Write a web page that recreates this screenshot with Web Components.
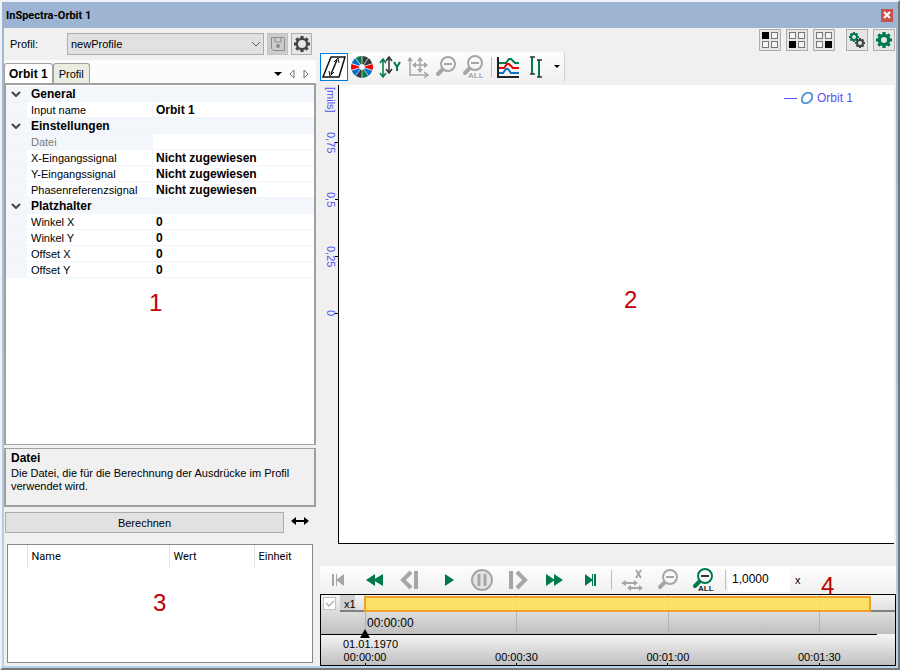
<!DOCTYPE html>
<html lang="de">
<head>
<meta charset="utf-8">
<title>InSpectra-Orbit 1</title>
<style>
  html, body {
    height: 100%;
  }

  body {
    margin: 0;
    font-family: "Liberation Sans", Arial, sans-serif;
    font-size: 11px;
    color: #000;
    background: #f0f0f0;
  }
</style>
</head>
<body>
<orbit-window heading="InSpectra-Orbit 1">
  <settings-pane slot="side"></settings-pane>
  <chart-pane slot="main"></chart-pane>
</orbit-window>

<script>
const GREEN = '#007a4d';
const GREY = '#a6a6a6';

const magnifier = (color) => `
  <circle cx="14" cy="8" r="7" fill="none" stroke="${color}" stroke-width="2"/>
  <path d="M10 8h8" stroke="${color === GREY ? GREY : '#333'}" stroke-width="2"/>
  <path d="M8 14l-4 4" stroke="${color}" stroke-width="4" stroke-linecap="round"/>`;

const allLabel = (color) => `
  <text x="7" y="23" font-family="Liberation Sans, sans-serif" font-weight="bold" font-size="8" fill="${color}" stroke="#f8f8f8" stroke-width="2" paint-order="stroke">ALL</text>`;

const gear = (cx, cy, r, color, hole) => {
  const outer = r * 0.78;
  let teeth = '';
  for (let i = 0; i < 8; i++) {
    teeth += `<rect x="${cx - r / 5}" y="${cy - r}" width="${r / 2.5}" height="${r / 2.5}" transform="rotate(${i * 45} ${cx} ${cy})"/>`;
  }
  return `<g fill="${color}">${teeth}</g>
    <circle cx="${cx}" cy="${cy}" r="${(outer + hole) / 2}" fill="none" stroke="${color}" stroke-width="${outer - hole}"/>`;
};

const wheel = () => {
  const colors = [GREEN, '#333d3d', '#0a6fc8', '#e00', '#333d3d', GREEN, '#333d3d', '#0a6fc8', '#e00', GREEN];
  const point = (deg, r) => {
    const a = deg * Math.PI / 180;
    return `${(11 + r * Math.sin(a)).toFixed(1)} ${(11 - r * Math.cos(a)).toFixed(1)}`;
  };
  const slices = ['#333d3d', '#333d3d', '#e00', '#0a6fc8', GREEN, '#333d3d', '#0a6fc8', '#e00', '#0a6fc8', GREEN];
  return slices.map((color, i) => {
    const a = i * 36 + 2;
    const b = a + 32;
    return `<path fill="${color}" d="M${point(a + 4, 3)}L${point(a, 11)}A11 11 0 0 1 ${point(b, 11)}L${point(b - 4, 3)}z"/>`;
  }).join('');
};

const quad = (filled) => [[0, 0], [9, 0], [0, 9], [9, 9]].map(([x, y], i) =>
  `<rect x="${x + 0.5}" y="${y + 0.5}" width="6" height="6" fill="${i === filled ? '#000' : '#f4f4f4'}" stroke="${i === filled ? '#000' : '#777'}"/>`).join('');

// name: [width, height, markup]
const ICONS = {
  slant: [24, 24, `<path d="M9 2h14l-6 20H1z" fill="#fff" stroke="#111" stroke-width="1.500"/>
    <path d="M15 5L9 19" stroke="#111" stroke-width="1.500"/><path d="M12 7l4-4 1 5M7 16l1 5 4-4" fill="none" stroke="#111"/>`],
  wheel: [22, 22, wheel()],
  scaleY: [22, 22, `<path d="M4 4v16M1 7l3-4 3 4M1 17l3 4 3-4" fill="none" stroke="${GREEN}" stroke-width="1.500"/>
    <path d="M10 2v14M7 5l3-4 3 4M7 13l3 4 3-4" fill="none" stroke="#333" stroke-width="1.500"/>
    <path d="M15 6l3 5 3-5M18 10v5" fill="none" stroke="${GREEN}" stroke-width="2"/>`],
  pan: [22, 22, `<g fill="none" stroke="${GREY}" stroke-width="1.500"><path d="M3 3v16h17M1 5l2-3 2 3M17 16l4 3-4 3"/>
    <path d="M13 3v12M7 9h12"/></g>
    <path d="M13 1l3 4h-6zM13 17l3-4h-6zM5 9l4-3v6zM21 9l-4-3v6z" fill="${GREY}"/>`],
  zoomOut: [24, 22, magnifier(GREY)],
  zoomAll: [26, 24, magnifier(GREY) + allLabel(GREY)],
  zoomAllGreen: [26, 24, magnifier(GREEN) + allLabel('#222')],
  curves: [22, 22, `<path d="M1 1v20h21" fill="none" stroke="#222" stroke-width="2"/>
    <path d="M2 7h7l3-4h2l4 4h4" fill="none" stroke="${GREEN}" stroke-width="2"/>
    <path d="M2 12h5l3-4h2l4 4h6" fill="none" stroke="#e00" stroke-width="2"/>
    <path d="M2 17h4l3-4h2l3 4h8" fill="none" stroke="#0a6fc8" stroke-width="2"/>`],
  cursors: [14, 22, `<path d="M3 1v17M10 4v17" stroke="${GREEN}" stroke-width="2"/><path d="M1 1h5M1 18h5M8 4h5M8 21h5" stroke="#333" stroke-width="1.500"/>`],
  caret: [6, 4, '<path d="M0 0h6L3 3z"/>'],
  quadTopLeft: [16, 16, quad(0)],
  quadBottomLeft: [16, 16, quad(2)],
  quadBottomRight: [16, 16, quad(3)],
  gears: [16, 16, gear(5, 5, 5, GREEN, 2) + gear(11, 11, 5, '#3c4444', 2)],
  gearGreen: [16, 16, gear(8, 8, 8, GREEN, 3)],
  gearDark: [16, 16, gear(8, 8, 8, '#444', 4)],
  disk: [14, 14, `<path d="M1.500 0.500h11l1 1v12h-11l-2-2v-11z" fill="none" stroke="#8a8a8a"/><path d="M4 1v4h6V1" fill="none" stroke="#8a8a8a"/><circle cx="7" cy="9" r="2" fill="#8a8a8a"/>`],
  first: [12, 12, `<path d="M1 0v12" stroke="${GREY}" stroke-width="2"/><path d="M4.500 0v12" stroke="${GREY}"/><path d="M12 0v12L4 6z" fill="${GREY}"/>`],
  rewind: [18, 12, `<path d="M10 0v12L1 6zM18 0v12L8 6z" fill="${GREEN}"/>`],
  stepBack: [18, 18, `<path d="M10 1L2 9l8 8" fill="none" stroke="${GREY}" stroke-width="4"/><path d="M15 0v18" stroke="${GREY}" stroke-width="4"/>`],
  play: [16, 12, `<path d="M7 0v12l9-6z" fill="${GREEN}"/>`],
  pause: [22, 22, `<circle cx="11" cy="11" r="10" fill="#e4e4e4" stroke="${GREY}" stroke-width="2"/><path d="M8 5v12M14 5v12" stroke="${GREY}" stroke-width="3"/>`],
  stepForward: [18, 18, `<path d="M8 1l8 8-8 8" fill="none" stroke="${GREY}" stroke-width="4"/><path d="M2 0v18" stroke="${GREY}" stroke-width="4"/>`],
  forward: [18, 12, `<path d="M1 0v12l9-6zM9 0v12l9-6z" fill="${GREEN}"/>`],
  last: [12, 12, `<path d="M1 0v12l8-6z" fill="${GREEN}"/><path d="M8.500 0v12" stroke="${GREEN}"/><path d="M11 0v12" stroke="${GREEN}" stroke-width="2"/>`],
  scaleX: [22, 22, `<path d="M3 14h12M8 19h12M15 1l5 8M20 1l-5 8" stroke="${GREY}" stroke-width="2"/>
    <path d="M0 14l5-3v6zM17 14l-4-3v6zM6 19l4-3v6zM22 19l-4-3v6z" fill="${GREY}"/>`],
  widen: [18, 10, '<path d="M4 5h10" stroke="#000" stroke-width="2"/><path d="M5 1v8L0 5zM13 1v8l5-4z"/>'],
  chevron: [10, 6, '<path d="M1 1l4 4 4-4" fill="none" stroke="#444" stroke-width="2"/>'],
  chevronThin: [10, 6, '<path d="M1 1l4 4 4-4" fill="none" stroke="#555"/>'],
  tabList: [8, 4, '<path d="M0 0h8L4 4z"/>'],
  tabLeft: [6, 10, '<path d="M5 1v8L1 5z" fill="none" stroke="#777"/>'],
  tabRight: [6, 10, '<path d="M1 1v8l4-4z" fill="none" stroke="#777"/>'],
  close: [8, 8, '<path d="M1 1l6 6M7 1L1 7" stroke="#fff" stroke-width="2"/>']
};

function icon(name) {
  const [w, h, body] = ICONS[name];
  return `<svg width="${w}" height="${h}" viewBox="0 0 ${w} ${h}" aria-hidden="true">${body}</svg>`;
}

class ToolButton extends HTMLElement {
  constructor() {
    super();
    this.attachShadow({ mode: 'open' });
  }

  connectedCallback() {
    this.shadowRoot.innerHTML = `
      <style>
        :host {
          display: flex;
          flex: none;
          width: 28px;
          height: 28px;
        }

        button {
          flex: 1;
          display: flex;
          align-items: center;
          justify-content: center;
          padding: 0;
          box-sizing: border-box;
          border: 1px solid transparent;
          background: transparent;
        }

        svg {
          flex: none;
          overflow: visible;
        }

        :host([active]) button {
          border-color: #0078d7;
          background: #fff;
        }

        :host([framed]) {
          width: 22px;
          height: 22px;
        }

        :host([framed]) button {
          border-color: #adadad;
          background: #e6e6e6;
        }

        :host([dim]) button {
          border-color: #c4c4c4;
          background: #cccccc;
        }

        :host([wide]) {
          width: 36px;
        }

        :host([narrow]) {
          width: 14px;
        }

        :host([close]) {
          width: 12px;
          height: 13px;
        }

        :host([close]) button {
          background: #c75050;
        }
      </style>
      <button type="button" aria-label="${this.getAttribute('label')}">${icon(this.getAttribute('icon'))}</button>
    `;
  }
}

class OrbitWindow extends HTMLElement {
  constructor() {
    super();
    this.attachShadow({ mode: 'open' });
  }

  connectedCallback() {
    this.shadowRoot.innerHTML = `
      <style>
        :host {
          display: flex;
          box-sizing: border-box;
          min-height: 100%;
          border-style: solid;
          border-width: 2px;
          border-color: #eef1f5 #777 #777 #eef1f5;
          background: linear-gradient(#9db5d2, #b9d1ea);
        }

        .frame {
          flex: 1;
          display: flex;
          flex-direction: column;
          min-width: 0;
          padding: 0 2px 2px;
        }

        header {
          display: flex;
          align-items: center;
          justify-content: space-between;
          height: 26px;
          padding: 0 3px 0 2px;
          background: #9db5d2;
        }

        h1 {
          margin: 0;
          font: bold 11px Roboto, sans-serif;
        }

        main {
          flex: 1;
          display: grid;
          grid-template-columns: 312px minmax(0, 1fr);
          column-gap: 4px;
          background: #f0f0f0;
        }
      </style>
      <div class="frame">
        <header>
          <h1>${this.getAttribute('heading')}</h1>
          <tool-button close icon="close" label="Schließen"></tool-button>
        </header>
        <main>
          <slot name="side"></slot>
          <slot name="main"></slot>
        </main>
      </div>
    `;
  }
}

class CalloutNumber extends HTMLElement {
  constructor() {
    super();
    this.attachShadow({ mode: 'open' });
    this.shadowRoot.innerHTML = `
      <style>
        :host {
          position: absolute;
          font: 24px/24px "Liberation Sans", sans-serif;
          color: #c00000;
          pointer-events: none;
        }
      </style>
      <slot></slot>
    `;
  }
}

class PropertyGrid extends HTMLElement {
  constructor() {
    super();
    this.attachShadow({ mode: 'open' });
    this.groups = [
      { title: 'General', rows: [['Input name', 'Orbit 1']] },
      {
        title: 'Einstellungen',
        rows: [
          ['Datei', '', 'off'],
          ['X-Eingangssignal', 'Nicht zugewiesen'],
          ['Y-Eingangssignal', 'Nicht zugewiesen'],
          ['Phasenreferenzsignal', 'Nicht zugewiesen']
        ]
      },
      { title: 'Platzhalter', rows: [['Winkel X', '0'], ['Winkel Y', '0'], ['Offset X', '0'], ['Offset Y', '0']] }
    ];
  }

  connectedCallback() {
    this.shadowRoot.innerHTML = `
      <style>
        :host {
          display: block;
          position: relative;
          padding-top: 1px;
          border: 2px solid #a0a0a0;
          border-bottom-width: 1px;
          background: #fff;
        }

        table {
          width: 100%;
          table-layout: fixed;
          border-collapse: separate;
          border-spacing: 0;
        }

        .gutter {
          width: 21px;
        }

        .name {
          width: 125px;
        }

        td, th {
          height: 16px;
          padding: 1px 0 0 4px;
          box-sizing: border-box;
          border-bottom: 1px solid #f2f6fc;
          line-height: 14px;
          text-align: left;
          font-weight: normal;
          white-space: nowrap;
        }

        .group th, .edge, .off th {
          background: #f3f7fc;
        }

        .group th, td {
          font: bold 12px/14px "Liberation Sans", sans-serif;
        }

        td {
          padding-left: 3px;
          border-left: 1px solid #f2f6fc;
        }

        td.edge {
          padding: 0;
          border-left: 0;
        }

        button {
          display: flex;
          padding: 4px 5px;
          border: 0;
          background: none;
        }

        .off th {
          color: #7a7a7a;
        }
      </style>
      <table>
        <colgroup><col class="gutter"><col class="name"><col></colgroup>
        ${this.groups.map(group => `
          <tbody>
            <tr class="group">
              <td class="edge"><button type="button" aria-label="${group.title}">${icon('chevron')}</button></td>
              <th colspan="2">${group.title}</th>
            </tr>
            ${group.rows.map(([name, value, state]) => `
              <tr class="${state || ''}"><td class="edge"></td><th scope="row">${name}</th><td>${value}</td></tr>
            `).join('')}
          </tbody>
        `).join('')}
      </table>
      <slot></slot>
    `;
  }
}

class ResultList extends HTMLElement {
  constructor() {
    super();
    this.attachShadow({ mode: 'open' });
    this.shadowRoot.innerHTML = `
      <style>
        :host {
          display: block;
          position: relative;
          box-sizing: border-box;
          border: 1px solid #828790;
          background: #fff;
        }

        table {
          width: 100%;
          table-layout: fixed;
          border-collapse: collapse;
        }

        th {
          height: 22px;
          padding: 0 0 0 4px;
          text-align: left;
          font: 11px Roboto, sans-serif;
        }

        th + th {
          border-left: 1px solid #e2e2e2;
        }

        .mark { width: 19px; }
        .title { width: 142px; }
        .value { width: 85px; }
      </style>
      <table>
        <colgroup><col class="mark"><col class="title"><col class="value"><col></colgroup>
        <thead><tr><th></th><th>Name</th><th>Wert</th><th>Einheit</th></tr></thead>
      </table>
      <slot></slot>
    `;
  }
}

class SettingsPane extends HTMLElement {
  constructor() {
    super();
    this.attachShadow({ mode: 'open' });
  }

  connectedCallback() {
    this.shadowRoot.innerHTML = `
      <style>
        :host {
          display: flex;
          flex-direction: column;
        }

        .profile {
          display: flex;
          align-items: center;
          gap: 3px;
          height: 32px;
          padding: 0 4px 0 6px;
        }

        .profile tool-button {
          width: 21px;
        }

        label {
          width: 54px;
        }

        .combo {
          flex: 1;
          display: grid;
          align-items: center;
        }

        .combo > * {
          grid-area: 1 / 1;
        }

        .combo svg {
          justify-self: end;
          margin-right: 3px;
          pointer-events: none;
        }

        select {
          appearance: none;
          height: 22px;
          padding: 0 3px;
          border: 1px solid #adadad;
          border-radius: 0;
          background: #e1e1e1;
          font: inherit;
          color: #000;
        }

        nav {
          display: flex;
          align-items: flex-end;
          height: 23px;
          background: #fcfcfc;
        }

        .tab {
          height: 20px;
          padding: 0 5px;
          border: 1px solid #a0a0a0;
          border-bottom: 0;
          border-radius: 3px 3px 0 0;
          background: #ecede0;
          font: inherit;
          color: #000;
        }

        .tab.current {
          padding: 0 4px;
          background: #fff;
          font: bold 12px "Liberation Sans", sans-serif;
        }

        .arrows {
          display: flex;
          align-self: center;
          padding-top: 4px;
          margin: 0 3px 0 auto;
        }

        property-grid {
          flex: 1;
        }

        .hint {
          height: 56px;
          margin-top: 3px;
          padding: 0 5px;
          border: 1px solid #a0a0a0;
          border-width: 1px 2px 2px;
          line-height: 13px;
        }

        .hint h2 {
          margin: 2px 0 1px;
          font: bold 12px/15px "Liberation Sans", sans-serif;
        }

        .hint p {
          margin: 0;
        }

        .run {
          display: flex;
          align-items: center;
          height: 31px;
          padding: 0 1px;
        }

        .run button {
          flex: 1;
          height: 21px;
          padding: 0;
          border: 1px solid #adadad;
          background: #e1e1e1;
          font: inherit;
          color: #000;
        }

        .run tool-button {
          align-self: flex-start;
          width: 31px;
        }

        result-list {
          height: 119px;
          margin: 6px 3px 3px;
        }
      </style>
      <div class="profile">
        <label for="profile">Profil:</label>
        <div class="combo">
          <select id="profile"><option>newProfile</option></select>
          ${icon('chevronThin')}
        </div>
        <tool-button framed dim icon="disk" label="Speichern"></tool-button>
        <tool-button framed icon="gearDark" label="Profil bearbeiten"></tool-button>
      </div>
      <nav>
        <button type="button" class="tab current">Orbit 1</button>
        <button type="button" class="tab">Profil</button>
        <div class="arrows">
          <tool-button narrow icon="tabList" label="Tabs"></tool-button>
          <tool-button narrow icon="tabLeft" label="Zurück"></tool-button>
          <tool-button narrow icon="tabRight" label="Weiter"></tool-button>
        </div>
      </nav>
      <property-grid>
        <callout-number style="left: 143px; top: 206px">1</callout-number>
      </property-grid>
      <section class="hint">
        <h2>Datei</h2>
        <p>Die Datei, die für die Berechnung der Ausdrücke im Profil verwendet wird.</p>
      </section>
      <div class="run">
        <button type="button">Berechnen</button>
        <tool-button icon="widen" label="Breite anpassen"></tool-button>
      </div>
      <result-list>
        <callout-number style="left: 145px; top: 46px">3</callout-number>
      </result-list>
    `;
  }
}

class OrbitPlot extends HTMLElement {
  constructor() {
    super();
    this.attachShadow({ mode: 'open' });
    this.ticks = ['0,75', '0,5', '0,25', '0'];
  }

  connectedCallback() {
    this.shadowRoot.innerHTML = `
      <style>
        :host {
          display: grid;
          grid-template-columns: 18px minmax(0, 1fr);
          font-family: "Liberation Sans", sans-serif;
          color: #5353f5;
        }

        ol {
          margin: 0;
          padding: 0;
          list-style: none;
        }

        li {
          display: flex;
          align-items: center;
          justify-content: flex-end;
          height: 57px;
        }

        li.unit {
          height: 29px;
          padding-right: 3px;
        }

        span {
          writing-mode: vertical-rl;
          line-height: 9px;
        }

        li:not(.unit)::after {
          content: "";
          width: 3px;
          height: 1px;
          background: #000;
        }

        .plot {
          position: relative;
          display: flex;
          justify-content: flex-end;
          align-items: flex-start;
          border: 1px solid #000;
          border-width: 0 0 1px 1px;
          background: #fff;
        }

        .legend {
          display: flex;
          align-items: center;
          gap: 4px;
          padding: 5px 41px 0 0;
          font-size: 12px;
          line-height: 16px;
        }

        .legend i {
          width: 13px;
          height: 1px;
          background: #5353f5;
        }
      </style>
      <ol>
        <li class="unit"><span>[mils]</span></li>
        ${this.ticks.map(tick => `<li><span>${tick}</span></li>`).join('')}
      </ol>
      <div class="plot">
        <div class="legend">
          <i></i>
          <svg width="12" height="12" viewBox="0 0 12 12" aria-hidden="true">
            <ellipse cx="6" cy="6" rx="6" ry="4.500" transform="rotate(-45 6 6)" fill="none" stroke="#5b9bd5" stroke-width="2"/>
          </svg>
          Orbit 1
        </div>
        <slot></slot>
      </div>
    `;
  }
}

class TimeLine extends HTMLElement {
  constructor() {
    super();
    this.attachShadow({ mode: 'open' });
    this.times = ['00:00:00', '00:00:30', '00:01:00', '00:01:30'];
  }

  connectedCallback() {
    this.shadowRoot.innerHTML = `
      <style>
        :host {
          display: block;
          border: 1px solid #000;
          font-family: "Liberation Sans", sans-serif;
        }

        .track, .scale {
          display: grid;
          grid-template-columns: 44px minmax(0, 1fr);
        }

        .track {
          height: 39px;
          background: linear-gradient(#f4f4f4, #bfbfbf);
        }

        .channel {
          display: flex;
        }

        .box {
          display: grid;
          height: 15px;
        }

        .box > * {
          grid-area: 1 / 1;
        }

        .box svg {
          margin: 5px 0 0 4px;
          pointer-events: none;
        }

        input {
          appearance: none;
          width: 13px;
          height: 13px;
          margin: 2px 4px 0 2px;
          border: 1px solid #c0c0c0;
          background: #fff;
        }

        .track label {
          flex: 1;
          height: 15px;
          padding-left: 4px;
          border-bottom: 2px solid #808080;
          line-height: 18px;
          background: linear-gradient(90deg, #d0d0d0 15px, transparent 15px);
        }

        .lane {
          position: relative;
          display: grid;
        }

        .grid, .content {
          grid-area: 1 / 1;
        }

        .grid, .marks {
          display: grid;
          grid-template-columns: 2fr 2fr 2fr 1fr;
        }

        .grid i {
          border-left: 1px solid #b2b2b2;
        }

        .bar {
          display: flex;
          height: 15px;
          padding-right: 24px;
          border-bottom: 2px solid #808080;
        }

        .bar b {
          flex: 1;
          height: 12px;
          margin: 1px 0 -2px -1px;
          border: 2px solid #f0a030;
          background: rgba(255, 226, 80, .85);
        }

        .now {
          padding: 4px 0 0 2px;
          font-size: 12px;
          line-height: 15px;
        }

        .cursor {
          position: absolute;
          left: -5px;
          bottom: -4px;
        }

        .limit {
          height: 1px;
          margin-right: 18px;
          background: #000;
        }

        .scale {
          height: 30px;
          background: linear-gradient(#f4f4f4, #bfbfbf);
        }

        .ruler {
          grid-column: 2;
        }

        .date {
          display: block;
          margin-left: -22px;
          padding-top: 2px;
          line-height: 14px;
        }

        .marks {
          line-height: 13px;
        }

        .marks span {
          display: flex;
          flex-direction: column;
          align-items: center;
          width: 0;
          white-space: nowrap;
        }

        .marks span::after {
          content: "";
          width: 1px;
          height: 2px;
          margin-top: -1px;
          background: #000;
        }
      </style>
      <div class="track">
        <div class="channel">
          <div class="box">
            <input id="channel" type="checkbox" checked disabled>
            <svg width="10" height="8" viewBox="0 0 10 8" aria-hidden="true"><path d="M1 3l3 3 5-5" fill="none" stroke="#b0b0b0" stroke-width="1.500"/></svg>
          </div>
          <label for="channel">x1</label>
        </div>
        <div class="lane">
          <div class="grid"><i></i><i></i><i></i><i></i></div>
          <div class="content">
            <div class="bar"><b></b></div>
            <div class="now">00:00:00</div>
          </div>
          <svg class="cursor" width="10" height="9" viewBox="0 0 10 9" aria-hidden="true"><path d="M5 0l5 9H0z"/></svg>
        </div>
      </div>
      <div class="limit"></div>
      <div class="scale">
        <div class="ruler">
          <time class="date">01.01.1970</time>
          <div class="marks">${this.times.map(time => `<span>${time}</span>`).join('')}</div>
        </div>
      </div>
    `;
  }
}

class ChartPane extends HTMLElement {
  constructor() {
    super();
    this.attachShadow({ mode: 'open' });
  }

  connectedCallback() {
    this.shadowRoot.innerHTML = `
      <style>
        :host {
          display: flex;
          flex-direction: column;
          min-width: 0;
        }

        .top {
          display: flex;
          align-items: flex-end;
          justify-content: space-between;
          height: 56px;
        }

        .tools, .player {
          display: flex;
          align-items: center;
          background: linear-gradient(#fdfdfd, #f0f0f0);
        }

        .tools {
          height: 30px;
          margin-bottom: 2px;
          border-right: 1px solid #d0d0d0;
          border-radius: 0 3px 3px 0;
        }

        hr {
          width: 1px;
          height: 20px;
          margin: 0 2px 0 3px;
          border: 0;
          background: #bdbdbd;
        }

        .layouts {
          display: flex;
          align-self: flex-start;
          gap: 5px;
          margin: 1px 1px 0 0;
        }

        .settings {
          margin-left: 6px;
        }

        orbit-plot {
          flex: 1;
          margin: 1px 2px 22px 0;
        }

        .player {
          position: relative;
          height: 28px;
        }

        input {
          width: 62px;
          height: 23px;
          box-sizing: border-box;
          padding: 0 4px 2px;
          border: 0;
          background: #fff;
          font: 12px "Liberation Sans", sans-serif;
          color: #000;
        }

        label {
          padding-left: 5px;
        }
      </style>
      <div class="top">
        <div class="tools">
          <tool-button active icon="slant" label="Orbit"></tool-button>
          <tool-button icon="wheel" label="Farben"></tool-button>
          <tool-button icon="scaleY" label="Y skalieren"></tool-button>
          <tool-button icon="pan" label="Verschieben"></tool-button>
          <tool-button icon="zoomOut" label="Verkleinern"></tool-button>
          <tool-button icon="zoomAll" label="Alles zeigen"></tool-button>
          <hr>
          <tool-button icon="curves" label="Kurven"></tool-button>
          <tool-button icon="cursors" label="Cursor"></tool-button>
          <tool-button narrow icon="caret" label="Mehr"></tool-button>
        </div>
        <div class="layouts">
          <tool-button framed icon="quadTopLeft" label="Oben links"></tool-button>
          <tool-button framed icon="quadBottomLeft" label="Unten links"></tool-button>
          <tool-button framed icon="quadBottomRight" label="Unten rechts"></tool-button>
          <tool-button framed class="settings" icon="gears" label="Optionen"></tool-button>
          <tool-button framed icon="gearGreen" label="Einstellungen"></tool-button>
        </div>
      </div>
      <orbit-plot>
        <callout-number style="left: 285px; top: 203px">2</callout-number>
      </orbit-plot>
      <div class="player">
        <tool-button wide icon="first" label="Anfang"></tool-button>
        <tool-button wide icon="rewind" label="Zurückspulen"></tool-button>
        <tool-button wide icon="stepBack" label="Schritt zurück"></tool-button>
        <tool-button wide icon="play" label="Wiedergabe"></tool-button>
        <tool-button wide icon="pause" label="Pause"></tool-button>
        <tool-button wide icon="stepForward" label="Schritt vor"></tool-button>
        <tool-button wide icon="forward" label="Vorspulen"></tool-button>
        <tool-button wide icon="last" label="Ende"></tool-button>
        <hr>
        <tool-button wide icon="scaleX" label="X skalieren"></tool-button>
        <tool-button wide icon="zoomOut" label="Verkleinern"></tool-button>
        <tool-button wide icon="zoomAllGreen" label="Alles zeigen"></tool-button>
        <hr>
        <input id="speed" type="text" value="1,0000">
        <label for="speed">x</label>
        <callout-number style="left: 501px; top: 8px">4</callout-number>
      </div>
      <time-line></time-line>
    `;
  }
}

customElements.define('tool-button', ToolButton);
customElements.define('callout-number', CalloutNumber);
customElements.define('property-grid', PropertyGrid);
customElements.define('result-list', ResultList);
customElements.define('settings-pane', SettingsPane);
customElements.define('orbit-plot', OrbitPlot);
customElements.define('time-line', TimeLine);
customElements.define('chart-pane', ChartPane);
customElements.define('orbit-window', OrbitWindow);
</script>
</body>
</html>
